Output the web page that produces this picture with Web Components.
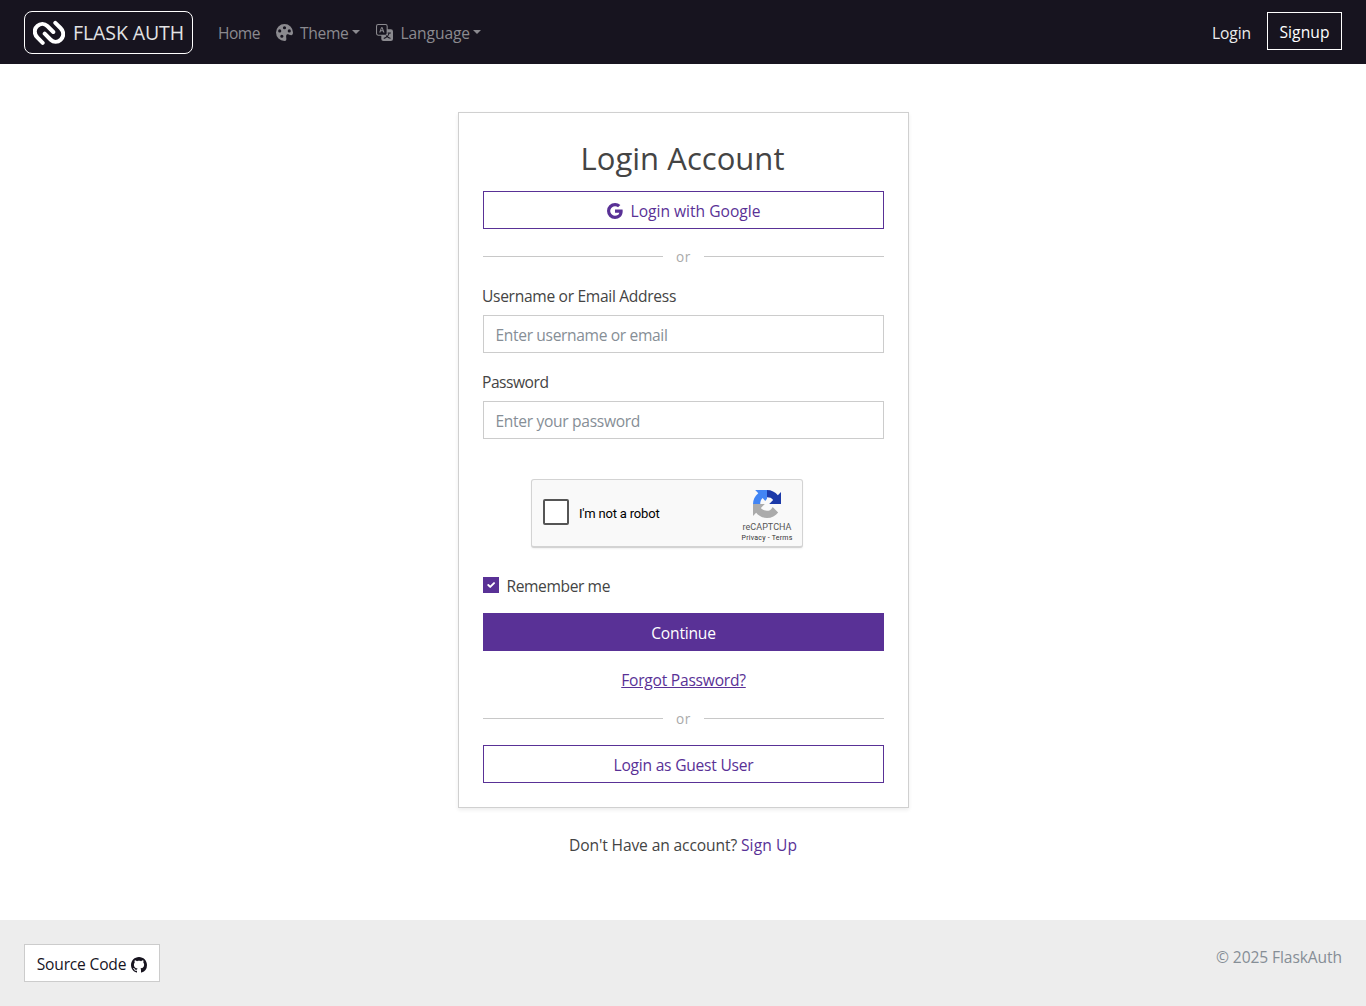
<!DOCTYPE html>
<html lang="en">
<head>
<meta charset="utf-8">
<title>Login | FlaskAuth</title>
<style>
body{margin:0;font:15.6px/24px "Open Sans","Noto Sans",sans-serif;color:#444;background:#fff}
</style>
</head>
<body>
<auth-page></auth-page>
<script>
const define=(name,html,setup)=>{
  const t=document.createElement('template');t.innerHTML=html;
  customElements.define(name,class extends HTMLElement{
    constructor(){super();this.attachShadow({mode:'open'}).append(t.content.cloneNode(true));}
    connectedCallback(){if(setup)setup(this,this.shadowRoot);}
  });
};

// Text run whose tracking is set so that it spans the width in "w".
define('ui-text','<style>:host{display:inline-block;white-space:nowrap}</style><slot></slot>',el=>{
  const fit=()=>{const w=+el.getAttribute('w');if(!w)return;
    el.style.letterSpacing='0px';
    const n=el.textContent.length;
    el.style.letterSpacing=((w-el.getBoundingClientRect().width)/n).toFixed(4)+'px';};
  requestAnimationFrame(fit);
});

const ICONS={
 google:'<path d="M15.545 6.558a9.42 9.42 0 0 1 .139 1.626c0 2.434-.87 4.492-2.384 5.885h.002C11.978 15.292 10.158 16 8 16A8 8 0 1 1 8 0a7.689 7.689 0 0 1 5.352 2.082l-2.284 2.284A4.347 4.347 0 0 0 8 3.166c-2.087 0-3.86 1.408-4.492 3.304a4.792 4.792 0 0 0 0 3.063h.003c.635 1.893 2.405 3.301 4.492 3.301 1.078 0 2.004-.276 2.722-.764h-.003a3.702 3.702 0 0 0 1.599-2.431H8v-3.08h7.545z"/>',
 github:'<path d="M8 0C3.58 0 0 3.58 0 8c0 3.54 2.29 6.53 5.47 7.59.4.07.55-.17.55-.38 0-.19-.01-.82-.01-1.49-2.01.37-2.53-.49-2.69-.94-.09-.23-.48-.94-.82-1.13-.28-.15-.68-.52-.01-.53.63-.01 1.08.58 1.23.82.72 1.21 1.87.87 2.33.66.07-.52.28-.87.51-1.07-1.78-.2-3.64-.89-3.64-3.95 0-.87.31-1.59.82-2.15-.08-.2-.36-1.02.08-2.12 0 0 .67-.21 2.2.82.64-.18 1.32-.27 2-.27.68 0 1.36.09 2 .27 1.53-1.04 2.2-.82 2.2-.82.44 1.1.16 1.92.08 2.12.51.56.82 1.27.82 2.15 0 3.07-1.87 3.75-3.65 3.95.29.25.54.73.54 1.48 0 1.07-.01 1.93-.01 2.2 0 .21.15.46.55.38A8.012 8.012 0 0 0 16 8c0-4.42-3.58-8-8-8z"/>',
 palette:'<path d="M12.433 10.07C14.133 10.585 16 11.15 16 8a8 8 0 1 0-8 8c1.996 0 1.826-1.504 1.649-3.08-.124-1.101-.252-2.237.351-2.92.465-.527 1.42-.237 2.433.07zM8 5a1.5 1.5 0 1 1 0-3 1.5 1.5 0 0 1 0 3zm4.5 3a1.5 1.5 0 1 1 0-3 1.5 1.5 0 0 1 0 3zM5 6.5a1.5 1.5 0 1 1-3 0 1.5 1.5 0 0 1 3 0zm.5 6.5a1.5 1.5 0 1 1 0-3 1.5 1.5 0 0 1 0 3z"/>',
 translate:'<path d="M4.545 6.714 4.11 8H3l1.862-5h1.284L8 8H6.833l-.435-1.286H4.545zm1.634-.736L5.5 3.956h-.049l-.679 2.022H6.18z"/><path d="M0 2a2 2 0 0 1 2-2h7a2 2 0 0 1 2 2v3h3a2 2 0 0 1 2 2v7a2 2 0 0 1-2 2H7a2 2 0 0 1-2-2v-3H2a2 2 0 0 1-2-2V2zm2-1a1 1 0 0 0-1 1v7a1 1 0 0 0 1 1h7a1 1 0 0 0 1-1V2a1 1 0 0 0-1-1H2zm7.138 9.995c.193.301.402.583.63.846-.748.575-1.673 1.001-2.768 1.292.178.217.451.635.555.867 1.125-.359 2.08-.844 2.886-1.494.777.665 1.739 1.165 2.93 1.472.133-.254.414-.673.629-.89-1.125-.253-2.057-.694-2.82-1.284.681-.747 1.222-1.651 1.621-2.757H14V8h-3v1.047h.765c-.318.844-.74 1.546-1.272 2.13a6.066 6.066 0 0 1-.415-.492 1.988 1.988 0 0 1-.94.31z"/>'
};
define('ui-icon','<style>:host{display:block;flex:none;width:var(--s,16px);height:var(--s,16px)}svg{display:block;width:100%;height:100%;fill:currentColor}</style><svg viewBox="0 0 16 16"></svg>',(el,r)=>{r.querySelector('svg').innerHTML=ICONS[el.getAttribute('name')];});

define('ui-button',`<style>:host{display:flex;flex:none;box-sizing:border-box;height:38px;align-items:center;justify-content:center;gap:8px;padding-top:2px;border:1px solid #593196;color:#593196;background:#fff}
:host([solid]){background:#593196;color:#fff}</style><slot></slot>`);

define('nav-bar',`<style>
:host{display:flex;box-sizing:border-box;height:64px;align-items:center;background:#17141f;padding:0 24px;color:#8b8a8f}
.brand{display:flex;align-items:center;box-sizing:border-box;width:169px;height:43px;margin-top:1px;border:1px solid #fff;border-radius:8px;padding:0 8px;gap:8px;color:#e3e3e4;font-size:19.5px}
.brand svg{display:block;width:32px;height:26px}
.links{display:flex;align-items:center;margin-left:25px;gap:16px;padding-top:1px}
.item{display:flex;align-items:center}
ui-icon{--s:17px;margin:0 7px 0 0}
.item+.item ui-icon{margin-right:8px}
.caret{border:4.5px solid transparent;border-top-color:currentColor;border-bottom:0;margin:-1px 0 0 3px}
.right{display:flex;margin-left:auto;align-items:center;gap:16px;color:#ececed}
.right>ui-text{padding-top:2px}
ui-button{width:75px;border-color:#fff;background:none;color:#fff;margin-top:-2px}
</style>
<div class="brand"><svg viewBox="0 0 32 26" fill="none" stroke="#fff" stroke-width="4" stroke-linecap="round" stroke-linejoin="round"><path d="M9.7 22.8 4.5 17.6C0.5 13.6 1.3 8.5 4.3 6C7.3 3.2 11.5 3.3 14.3 6L20.3 12"/><path d="M22.3 2.8 27.5 8C31.5 12 30.7 17.1 27.7 19.7C24.7 22.5 20.5 22.4 17.7 19.7L11.7 13.7"/></svg><ui-text w="111">FLASK AUTH</ui-text></div>
<div class="links"><ui-text w="42">Home</ui-text>
<div class="item"><ui-icon name="palette"></ui-icon><ui-text w="48.5">Theme</ui-text><i class="caret"></i></div>
<div class="item"><ui-icon name="translate"></ui-icon><ui-text w="69.5">Language</ui-text><i class="caret"></i></div></div>
<div class="right"><ui-text w="39">Login</ui-text><ui-button><ui-text w="50">Signup</ui-text></ui-button></div>`);

define('or-divider',`<style>:host{display:flex;flex:none;align-items:center;gap:13px;height:20px;color:#aaa;font-size:13.6px;line-height:20px}
i{flex:1;height:1px;background:#c8c8c8}ui-text{padding-top:0}</style><i></i><ui-text w="15">or</ui-text><i></i>`);

define('form-field',`<style>:host{display:block;flex:none}.box{display:flex;align-items:center;box-sizing:border-box;height:38px;margin-top:7px;border:1px solid #ccc;padding:1px 12px 0;color:#868e96;background:#fff}
.label{display:block;height:24px;padding-top:1px}.label,.box{text-indent:-.5px}</style><div class="label"><slot name="label"></slot></div><div class="box"><slot></slot></div>`);

define('captcha-box',`<style>
:host{display:flex;flex:none;box-sizing:border-box;width:272px;height:69px;border:1px solid #d3d3d3;border-bottom-width:2px;border-radius:3px;background:#f9f9f9;box-shadow:0 1px 2px rgba(0,0,0,.06);align-items:center;font-family:Roboto,sans-serif;color:#000}
.check{box-sizing:border-box;width:26px;height:26px;border:2px solid #555;border-radius:2px;background:#fff;margin:-3px 10.5px 0 10.5px}
.label{font-size:13px;line-height:20px;padding-top:1px}
.mark{display:flex;flex-direction:column;align-items:center;width:52px;margin:0 9px 0 auto;padding-top:6px;color:#555}
svg{display:block;width:28px;height:28px}
.name{font-size:9px;line-height:12px;margin-top:3px}.legal{font-size:7px;line-height:10px;color:#333}
</style><div class="check"></div><ui-text class="label" w="80.5">I'm not a robot</ui-text>
<div class="mark"><svg viewBox="0 0 64 64"><path fill="#1c3aa9" d="M32 .04C42 .04 50.9 4.6 56.8 11.8L64 4.6V32H37L46 23C43 18 38 16.5 32 16.5z"/><path fill="#4285f4" d="M32 .04H5L12 7.2C4.5 13 0 22 0 32H16.5C16.5 26 18 21.5 22 18L28 25L32 20z"/><path fill="#ababab" d="M0 32V59.3L7.2 52.1C13 59.3 22 64 32 64C42.4 64 51.7 59 57.5 51.2L45 39C42 45 38 47.6 32 47.6C26 47.6 21 45 18 41L27 32z"/></svg>
<ui-text class="name" w="49">reCAPTCHA</ui-text><ui-text class="legal" w="51">Privacy - Terms</ui-text></div>`);

define('login-card',`<style>
:host{display:flex;flex-direction:column;flex:none;box-sizing:border-box;width:451px;height:696px;border:1px solid #d0d0d0;padding:24px;background:#fff;box-shadow:0 2px 4px rgba(0,0,0,.075)}
h2{margin:2px 0 14px;font-weight:400;font-size:31px;line-height:38px;text-align:center;text-indent:-1px}
.d1{margin:17.5px 0 16.5px}
.f2{margin-top:16px}
captcha-box{margin:40px 0 0 48px}
.remember{display:flex;align-items:center;height:24px;margin:26px 0 15px;gap:7.5px}
.remember svg{display:block;width:16px;height:16px;background:#593196;margin-top:-2px}
.forgot{text-align:center;color:#593196;margin:17px 0 16.5px;height:24px}
.forgot ui-text{text-decoration:underline}
.d2{margin:0 0 16.5px}
</style>
<h2><ui-text w="203">Login Account</ui-text></h2>
<ui-button><ui-icon name="google"></ui-icon><ui-text w="130">Login with Google</ui-text></ui-button>
<or-divider class="d1"></or-divider>
<form-field><ui-text slot="label" w="193.5">Username or Email Address</ui-text><ui-text w="171.5">Enter username or email</ui-text></form-field>
<form-field class="f2"><ui-text slot="label" w="66">Password</ui-text><ui-text w="144">Enter your password</ui-text></form-field>
<captcha-box></captcha-box>
<div class="remember"><svg viewBox="0 0 20 20"><path d="m6 10 3 3 6-6" fill="none" stroke="#fff" stroke-width="3" stroke-linecap="round" stroke-linejoin="round" transform="translate(1.8 2) scale(.8)"/></svg><ui-text w="103.5">Remember me</ui-text></div>
<ui-button solid><ui-text w="64.5">Continue</ui-text></ui-button>
<div class="forgot"><ui-text w="124.5">Forgot Password?</ui-text></div>
<or-divider class="d2"></or-divider>
<ui-button><ui-text w="140">Login as Guest User</ui-text></ui-button>`);

define('page-footer',`<style>
:host{display:flex;box-sizing:border-box;height:86px;background:#ededed;padding:24px;justify-content:space-between;align-items:flex-start}
ui-button{width:136px;border-color:#ccc;color:#17141f;gap:5px}ui-icon{margin-top:2px}.copy{color:#868e96;padding-top:1px}
</style><ui-button><ui-text w="89.5">Source Code</ui-text><ui-icon name="github"></ui-icon></ui-button><ui-text class="copy" w="126">© 2025 FlaskAuth</ui-text>`);

define('auth-page',`<style>
:host{display:flex;flex-direction:column;height:1006px}
main{flex:1;display:flex;flex-direction:column;padding-top:48px}
login-card{margin-left:458px}
.signup{display:flex;justify-content:center;gap:4px;margin-top:25px}a{color:#593196}
</style><nav-bar></nav-bar><main><login-card></login-card><div class="signup"><ui-text w="168">Don't Have an account?</ui-text><a><ui-text w="56">Sign Up</ui-text></a></div></main><page-footer></page-footer>`);
</script>
</body>
</html>
